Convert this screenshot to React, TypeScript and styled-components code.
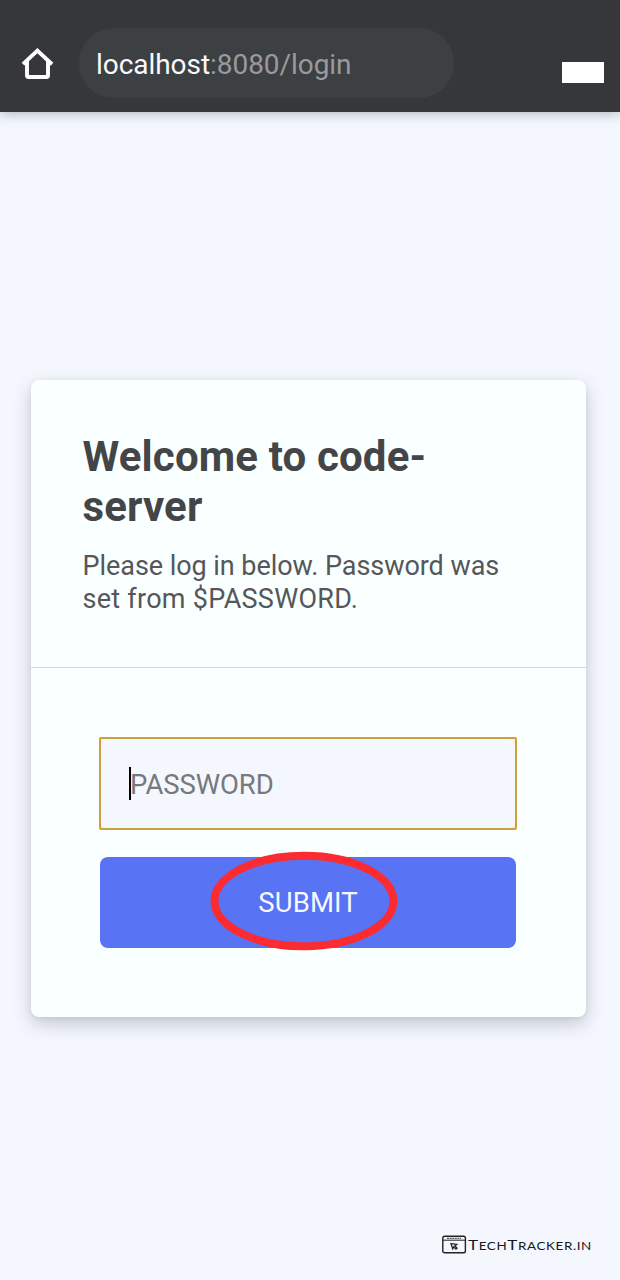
import React from "react";
import styled, { createGlobalStyle } from "styled-components";

const GlobalStyle = createGlobalStyle`
  * { box-sizing: border-box; }
  body { margin: 0; background: #f4f7fe; font-family: Roboto, sans-serif; }
`;

const Page = styled.div`
  display: flex;
  flex-direction: column;
  width: 620px;
  height: 1280px;
  overflow: hidden;
  background: #f4f7fe;
`;

const BrowserBar = styled.header`
  display: flex;
  align-items: flex-start;
  flex: none;
  height: 112px;
  padding: 28px 16px 0 20px;
  background: #36373b;
  box-shadow: 0 1px 12px rgba(40, 44, 52, 0.36);
`;

const HomeIcon = styled.svg`
  flex: none;
  width: 34px;
  height: 34px;
  margin-top: 19px;
`;

const AddressBar = styled.div`
  display: flex;
  align-items: center;
  width: 375px;
  height: 70px;
  margin-left: 25px;
  padding: 4px 0 0 17px;
  border-radius: 35px;
  background: #3d4043;
  color: #989b9e;
  font-size: 28px;
  line-height: 34px;
  letter-spacing: -0.05px;
`;

const Host = styled.span`
  color: #f8f9fa;
`;

const BlankTile = styled.div`
  width: 42px;
  height: 21px;
  margin: 34px 0 0 auto;
  background: #fff;
`;

const Main = styled.main`
  flex: 1;
  padding: 268px 34px 0 31px;
`;

const Card = styled.section`
  height: 637px;
  border-radius: 8px;
  background: #faffff;
  box-shadow: 0 7px 18px rgba(60, 66, 77, 0.26), 0 1px 4px rgba(60, 66, 77, 0.08);
`;

const CardHeader = styled.div`
  height: 288px;
  padding: 52px 51.5px 0;
  border-bottom: 1px solid #d5d9dd;
`;

const Title = styled.h1`
  margin: 0;
  color: #434547;
  font-size: 42px;
  font-weight: 700;
  line-height: 50px;
  letter-spacing: 0.15px;
`;

const Description = styled.p`
  margin: 18px 0 0;
  color: #55575a;
  font-size: 27px;
  line-height: 33px;
  white-space: nowrap;
`;

const Line = styled.span<{ $tracking: number }>`
  display: block;
  letter-spacing: ${(p) => p.$tracking}px;
`;

const LoginForm = styled.form`
  display: flex;
  flex-direction: column;
  gap: 27px;
  padding: 69px 69px 0 68px;
`;

const Field = styled.div`
  height: 93px;
  border: 2px solid #cf9f3c;
  border-radius: 2px;
  background: #f8efd6;
`;

const FieldInner = styled.div`
  display: flex;
  align-items: center;
  height: 100%;
  padding: 0 28px;
  border-radius: 7px;
  background: #f4f7fd;
`;

const Caret = styled.span`
  width: 2px;
  height: 33px;
  margin-right: -1px;
  background: #000;
`;

const Placeholder = styled.span`
  padding-top: 2px;
  color: #77797c;
  font-size: 27.5px;
  letter-spacing: -0.1px;
`;

const SubmitButton = styled.button`
  position: relative;
  height: 91px;
  margin: 0 1px;
  padding: 0;
  border: 0;
  border-radius: 8px;
  background: #5873f4;
  color: #f6f9ff;
  font-family: inherit;
  font-size: 27.5px;
  letter-spacing: 0.1px;
`;

const HighlightRing = styled.svg`
  position: absolute;
  left: 110px;
  top: -6px;
  width: 188px;
  height: 100px;
`;

const Watermark = styled.footer`
  display: flex;
  align-items: center;
  flex: none;
  height: 50px;
  padding: 0 0 22px 442px;
`;

const WindowIcon = styled.svg`
  flex: none;
  width: 25px;
  height: 19px;
`;

const Brand = styled.span`
  margin-left: 1px;
  color: #17191c;
  font-family: Lato, sans-serif;
  font-size: 11px;
  line-height: 18px;
  letter-spacing: 0.5px;
  white-space: nowrap;
  transform: translateY(1px) scaleX(1.22);
  transform-origin: left center;
`;

const Initial = styled.span`
  font-size: 14px;
`;

export default function App() {
  return (
    <>
      <GlobalStyle />
      <Page>
        <BrowserBar>
          <HomeIcon viewBox="0 0 34 34" fill="none" stroke="#fff" strokeWidth="3.9">
            <path d="M3 17.2 17.4 3.6 32 17.2" />
            <path d="M7 14V28.5Q7 30 8.5 30H26.5Q28 30 28 28.5V14" />
          </HomeIcon>
          <AddressBar>
            <Host>localhost</Host>:8080/login
          </AddressBar>
          <BlankTile />
        </BrowserBar>
        <Main>
          <Card>
            <CardHeader>
              <Title>
                Welcome to code-
                <br />
                server
              </Title>
              <Description>
                <Line $tracking={-0.05}>Please log in below. Password was</Line>
                <Line $tracking={0.27}>set from $PASSWORD.</Line>
              </Description>
            </CardHeader>
            <LoginForm>
              <Field>
                <FieldInner>
                  <Caret />
                  <Placeholder>PASSWORD</Placeholder>
                </FieldInner>
              </Field>
              <SubmitButton type="button">
                SUBMIT
                <HighlightRing viewBox="0 0 188 100">
                  <ellipse cx="94" cy="50" rx="89.5" ry="45.3" fill="none" stroke="#fb2c31" strokeWidth="8" />
                </HighlightRing>
              </SubmitButton>
            </LoginForm>
          </Card>
        </Main>
        <Watermark>
          <WindowIcon viewBox="0 0 25 19" fill="none" stroke="#202226" strokeWidth="1.4">
            <rect x="0.8" y="1.2" width="22.6" height="16.6" rx="1.8" />
            <path d="M1 5.2H23.2" strokeWidth="1" />
            <path d="M5 3.3H19" strokeWidth="0.9" strokeDasharray="2 0.6" />
            <path d="M9 8.6 14.8 9.4 12.9 10.8 15 13.2 13.9 14.1 11.7 11.9 10.7 13.8Z" strokeWidth="1.3" />
          </WindowIcon>
          <Brand>
            <Initial>T</Initial>ECH<Initial>T</Initial>RACKER.IN
          </Brand>
        </Watermark>
      </Page>
    </>
  );
}
